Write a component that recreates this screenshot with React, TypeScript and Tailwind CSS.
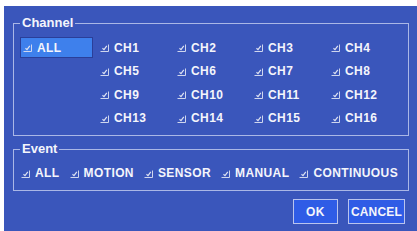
import React from "react";

const channels = Array.from({ length: 16 }, (_, i) => `CH${i + 1}`);
const events = ["ALL", "MOTION", "SENSOR", "MANUAL", "CONTINUOUS"];

function Check() {
  return (
    <svg width="9" height="9" viewBox="0 0 9 9" className="shrink-0" fill="none">
      <path d="M0.5 8.5 H8.5 V1.5" stroke="#cfd6ee" strokeWidth="1" />
      <path d="M2.5 5.2 L4 6.6 L6.8 2.8" stroke="#dfe3f3" strokeWidth="1.2" />
    </svg>
  );
}

function Item({ label }: { label: string }) {
  return (
    <div className="flex items-center gap-[5px]">
      <Check />
      <span className="text-[12px] font-bold leading-none tracking-[0.4px] text-[#f4f5fb]">{label}</span>
    </div>
  );
}

export default function App() {
  return (
    <div
      className="h-[231px] w-[417px] overflow-hidden bg-white pl-[4px] pt-[6px]"
      style={{ fontFamily: '"Liberation Sans", Arial, sans-serif' }}
    >
      <div className="flex h-full flex-col bg-[#3a56bb] pl-[9px] pr-[8px] pt-[9px]">
        <fieldset className="border border-[#aab7e6] pb-[5px] pl-[6px] pt-[5px]">
          <legend className="px-[2px] text-[13px] font-bold leading-[16px] text-[#f4f5fb]">Channel</legend>
          <div className="grid grid-cols-[80px_77px_77px_77px_77px] auto-rows-[23.5px] items-center">
            <div className="flex h-[21px] w-[73px] items-center border border-[#2a3f99] bg-[#3e80ec] pl-[2px]">
              <Item label="ALL" />
            </div>
            {channels.map((ch, i) => (
              <div key={ch} className={i % 4 === 0 ? "col-start-2" : ""}>
                <Item label={ch} />
              </div>
            ))}
          </div>
        </fieldset>

        <fieldset className="mt-[5px] border border-[#aab7e6] pb-[9px] pl-[7px] pt-[8px]">
          <legend className="-ml-[1px] px-[2px] text-[13px] font-bold leading-[16px] text-[#f4f5fb]">Event</legend>
          <div className="flex h-[16px] items-center gap-[10px]">
            {events.map((ev) => (
              <Item key={ev} label={ev} />
            ))}
          </div>
        </fieldset>

        <div className="mt-[8px] flex justify-end gap-[10px] pr-[4px]">
          <button
            type="button"
            className="flex h-[25px] w-[45px] items-center justify-center border border-[#b9c4ee] bg-[#2f5ce6] text-[12px] font-bold tracking-[0.4px] text-[#f4f5fb]"
          >
            OK
          </button>
          <button
            type="button"
            className="flex h-[25px] w-[57px] items-center justify-center border border-[#b9c4ee] bg-[#2f5ce6] text-[12px] font-bold tracking-[0.2px] text-[#f4f5fb]"
          >
            CANCEL
          </button>
        </div>
      </div>
    </div>
  );
}
